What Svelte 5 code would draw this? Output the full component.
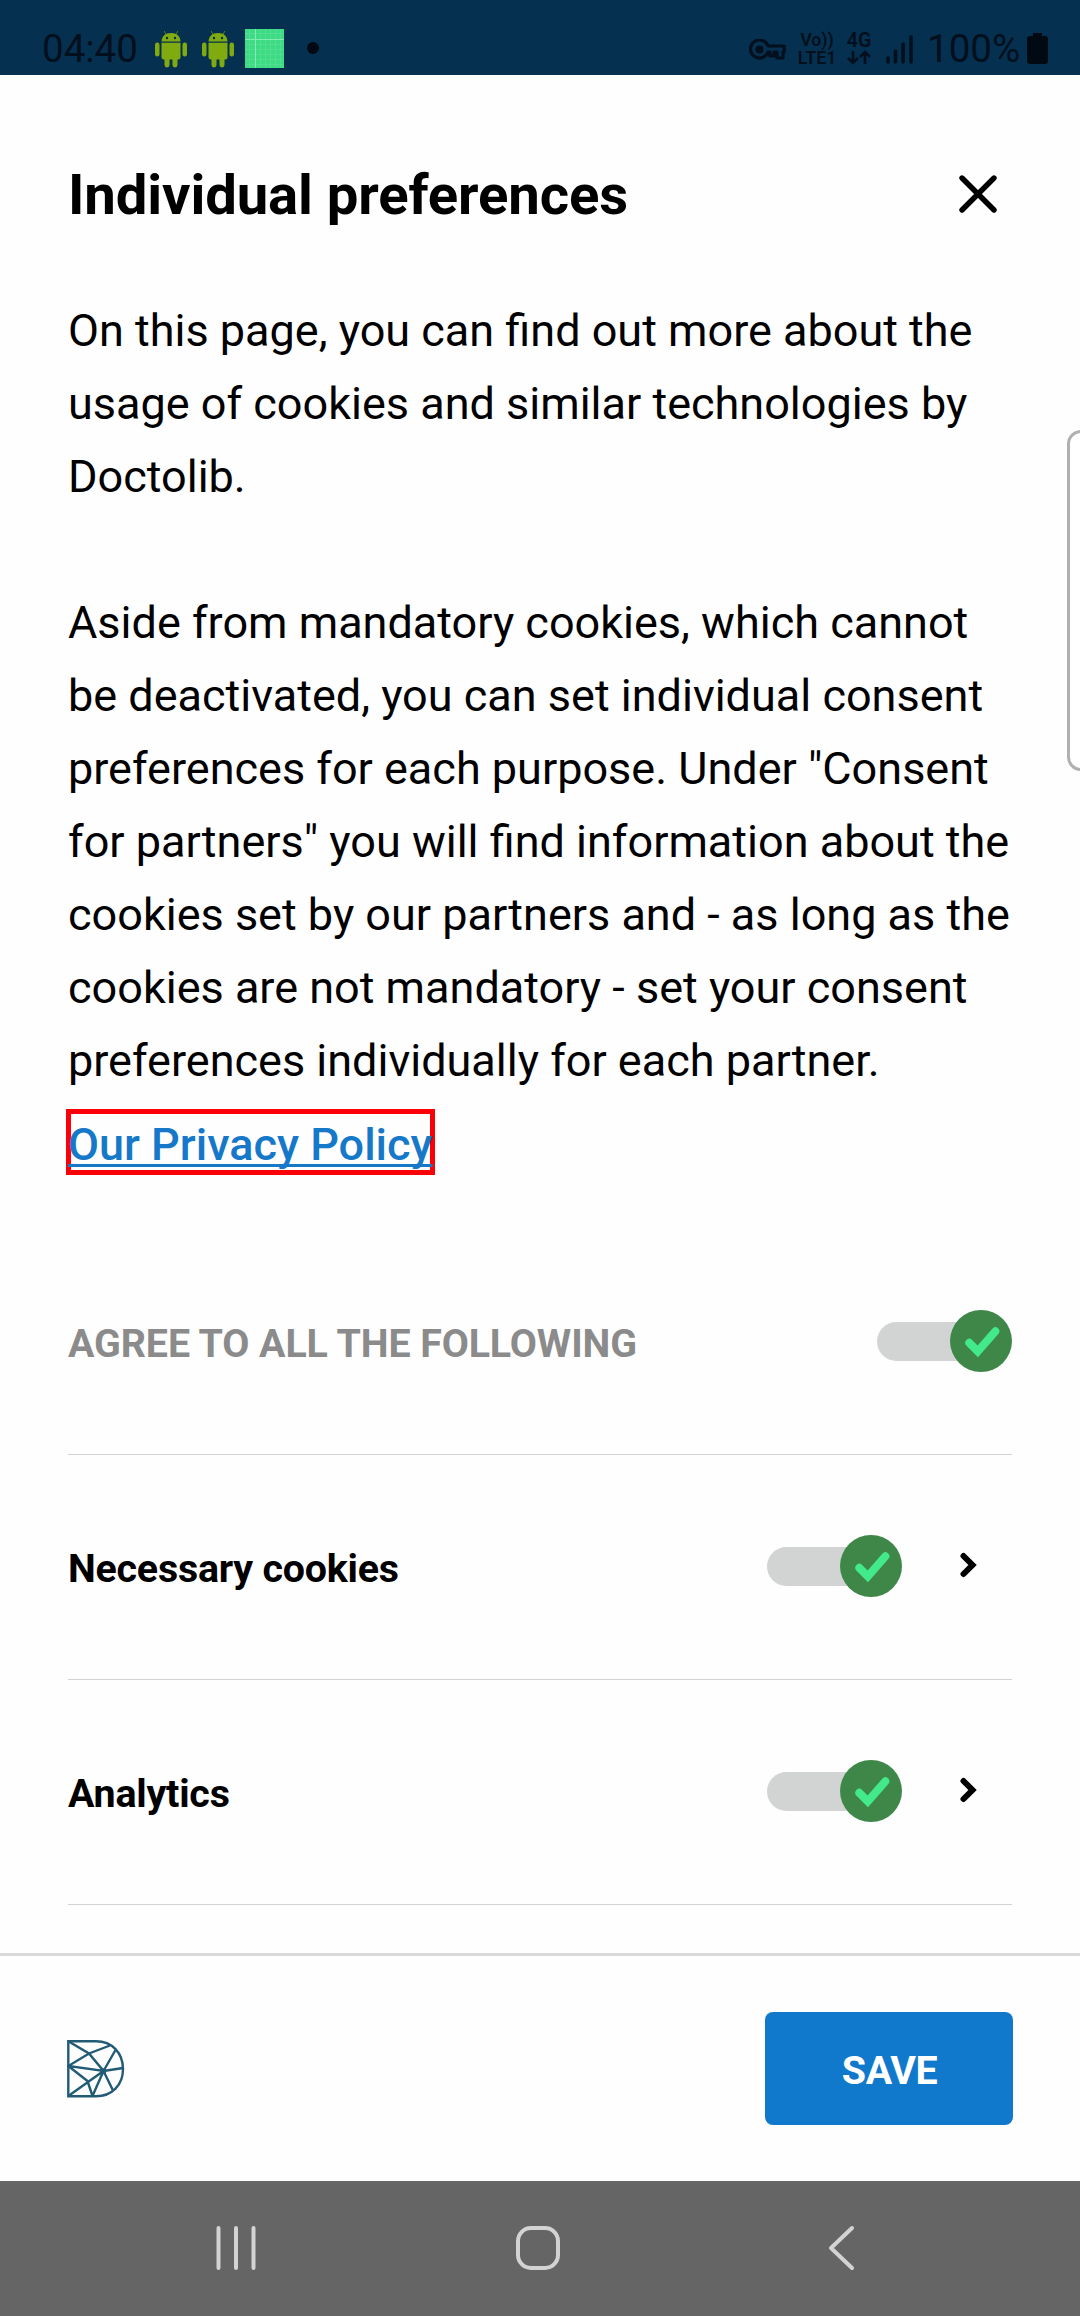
<script>
  const paragraphs = [
    ['On this page, you can find out more about the', 'usage of cookies and similar technologies by', 'Doctolib.'],
    [
      'Aside from mandatory cookies, which cannot',
      'be deactivated, you can set individual consent',
      'preferences for each purpose. Under "Consent',
      'for partners" you will find information about the',
      'cookies set by our partners and - as long as the',
      'cookies are not mandatory - set your consent',
      'preferences individually for each partner.'
    ]
  ];
  let rows = $state([
    { label: 'AGREE TO ALL THE FOLLOWING', all: true, on: true },
    { label: 'Necessary cookies', all: false, on: true },
    { label: 'Analytics', all: false, on: true }
  ]);
</script>

{#snippet android()}
  <svg class="android" width="32" height="38" viewBox="0 0 32 38">
    <g fill="#7fab10">
      <path d="M6.500 11.500C7 6 10 3 16 3s9 3 9.500 8.500z" />
      <path d="M6.500 12.700h19V27a2.500 2.500 0 0 1-2.500 2.500H9A2.500 2.500 0 0 1 6.500 27z" />
      <rect x="0" y="12.500" width="4.500" height="14" rx="2.200" />
      <rect x="27.500" y="12.500" width="4.500" height="14" rx="2.200" />
      <rect x="9.500" y="26" width="5" height="11.500" rx="2.400" />
      <rect x="17.500" y="26" width="5" height="11.500" rx="2.400" />
    </g>
    <path d="M10.800 4L9.200 1M21.200 4l1.600-3" stroke="#4f7a20" stroke-width="1" />
    <circle cx="12" cy="8" r="1.200" fill="#06304f" /><circle cx="20" cy="8" r="1.200" fill="#06304f" />
  </svg>
{/snippet}

<div class="screen">
  <header class="status">
    <span class="time">04:40</span>
    {@render android()}
    {@render android()}
    <svg class="grid" width="39" height="39" viewBox="0 0 39 39">
      <rect width="39" height="39" fill="#3ddc84" />
      <path d="M4.500 0v39M15.500 0v39M20.500 0v39M25.500 0v39M30.500 0v39M35.500 0v39M0 4.500h39M0 15.500h39M0 20.500h39M0 25.500h39M0 30.500h39M0 35.500h39" stroke="#50df90" stroke-width="1" />
      <path d="M10.500 0v39M0 10.500h39" stroke="#84ecb0" stroke-width="1" />
    </svg>
    <span class="dot"></span>
    <div class="system">
      <svg class="key" width="37" height="22" viewBox="0 0 37 22">
        <path d="M19 7h16.200v6H34v6h-6v-6h-3v4h-4v-4h-2a9 9 0 1 1 0-6z" fill="none" stroke="#020f1c" stroke-width="3.200" stroke-linejoin="round" />
        <circle cx="10.500" cy="10.500" r="4" fill="#020f1c" />
      </svg>
      <div class="volte"><span>Vo))</span><span>LTE1</span></div>
      <div class="network">
        <span>4G</span>
        <svg width="26" height="15" viewBox="0 0 26 15">
          <path d="M7 1v11M2 8l5 5 5-5M19 14V3M14 7l5-5 5 5" fill="none" stroke="#020f1c" stroke-width="2.600" />
        </svg>
      </div>
      <svg class="signal" width="27" height="30" viewBox="0 0 27 30">
        <path d="M2 28v-4M9.500 28V17M17 28V10M25 28V3" stroke="#020f1c" stroke-width="3.600" stroke-linecap="round" />
      </svg>
      <span class="percent">100%</span>
      <svg class="battery" width="21" height="31" viewBox="0 0 21 31">
        <path d="M6 0h9v3h3a3 3 0 0 1 3 3v22a3 3 0 0 1-3 3H3a3 3 0 0 1-3-3V6a3 3 0 0 1 3-3h3z" fill="#010a12" />
      </svg>
    </div>
  </header>

  <main>
    <div class="heading">
      <h1>Individual preferences</h1>
      <button class="close" aria-label="Close">
        <svg width="40" height="40" viewBox="0 0 40 40"><path d="M4 4l32 32M36 4L4 36" stroke="#000" stroke-width="5.400" stroke-linecap="round" /></svg>
      </button>
    </div>
    {#each paragraphs as lines}
      <p>{#each lines as line}<span class="line">{line}</span>{/each}</p>
    {/each}
    <a class="policy" href="#policy">Our Privacy Policy</a>

    <div class="rows">
      {#each rows as row}
        <div class="row" class:all={row.all}>
          <span class="label">{row.label}</span>
          <button class="toggle" aria-label={row.label} aria-pressed={row.on} onclick={() => (row.on = !row.on)}>
            <svg width="135" height="62" viewBox="0 0 135 62">
              <rect x="0" y="12" width="125" height="39" rx="19.500" fill="#d2d4d3" />
              <circle cx="104" cy="31" r="31" fill="#3e8748" />
              <path d="M92.300 32.800l8.500 8.500L118.300 21.300" fill="none" stroke="#43ea8c" stroke-width="8" stroke-linecap="round" />
            </svg>
          </button>
          {#if !row.all}
            <svg class="chevron" width="18" height="26" viewBox="0 0 18 26"><path d="M4.500 4l9 9-9 9" fill="none" stroke="#000" stroke-width="6" stroke-linecap="round" /></svg>
          {/if}
        </div>
      {/each}
    </div>
  </main>

  <footer>
    <svg width="58" height="58" viewBox="0 0 58 58" fill="none" stroke="#225b75" stroke-width="2.400">
      <path d="M1.300 1.300H29C45 1.300 56 13 56 29S45 56.300 29 56.300H1.300z" />
      <path d="M1.300 1.300L22 13.500 36.500 31 1.300 26 22 13.500 43 5.500M36.500 31L48.500 10M36.500 31L56 28M36.500 31L46 50.500M36.500 31L25.500 56M36.500 31L1.300 56M1.300 26L20.500 41 25.500 56" />
      <circle cx="36.500" cy="31" r="1.500" fill="#225b75" />
    </svg>
    <button class="save">SAVE</button>
  </footer>

  <nav>
    <svg width="40" height="46" viewBox="0 0 40 46"><path d="M2.500 3v40M20 3v40M37.500 3v40" stroke="#d3d3d3" stroke-width="4" stroke-linecap="round" /></svg>
    <svg class="home" width="44" height="44" viewBox="0 0 44 44"><rect x="2" y="2" width="40" height="40" rx="13" fill="none" stroke="#d3d3d3" stroke-width="4" /></svg>
    <svg width="28" height="46" viewBox="0 0 28 46"><path d="M24 3L3 23l21 20" fill="none" stroke="#d3d3d3" stroke-width="4" stroke-linecap="round" stroke-linejoin="round" /></svg>
  </nav>
  <div class="edge-handle"></div>
</div>

<style>
  :global(body) { margin: 0; background: #fff; }
  .screen {
    position: relative; width: 1080px; height: 2316px; overflow: hidden;
    display: flex; flex-direction: column; box-sizing: border-box;
    background: #fefefe; color: #000; font-family: Roboto, sans-serif;
  }
  button { border: 0; padding: 0; background: none; font: inherit; }
  svg { display: block; flex: none; }

  .status { height: 75px; flex: none; box-sizing: border-box; padding: 20px 32px 0 42px; display: flex; align-items: center; background: #06304f; color: #020f1c; }
  .time { width: 113px; font-size: 38.500px; line-height: 56px; padding-top: 2px; flex: none; }
  .android { margin: 2px 15px 0 0; }
  .grid { margin: 2px 0 0 -4px; }
  .dot { width: 12px; height: 12px; margin-left: 23px; border-radius: 50%; background: #010a12; }
  .system { margin-left: auto; display: flex; align-items: center; }
  .key { margin: 4px 11px 0 0; }
  .volte { width: 40px; display: flex; flex-direction: column; align-items: center; font-size: 17.800px; line-height: 18px; font-weight: 600; margin: 2px 8px 0 0; }
  .network { width: 28px; display: flex; flex-direction: column; align-items: center; font-size: 19.500px; line-height: 18px; font-weight: 600; margin: 2px 13px 0 0; }
  .signal { margin: 2px 14px 0 0; }
  .percent { width: 93px; font-size: 38.500px; line-height: 56px; padding-top: 2px; }
  .battery { margin: 2px 0 0 7px; }

  main { height: 1878px; flex: none; box-sizing: border-box; padding: 79px 68px 0; overflow: hidden; }
  .heading { height: 80px; display: flex; justify-content: space-between; align-items: center; margin-bottom: 60px; }
  h1 { margin: 0; padding-top: 2px; font-size: 56.250px; line-height: 78px; font-weight: 700; letter-spacing: -0.12px; white-space: nowrap; }
  .close { margin-right: 14px; }
  p { margin: 0 0 73px; font-size: 45px; line-height: 73px; }
  .line { display: block; white-space: nowrap; }
  p + p { margin-bottom: 12px; }
  .policy { display: block; width: 359px; height: 56px; box-sizing: content-box; margin-left: -2px; border: 5px solid #fb0007; color: #1578c9; font-size: 45px; line-height: 61px; font-weight: 500; text-indent: -3px; text-decoration: underline; text-decoration-thickness: 3px; text-decoration-skip-ink: none; text-underline-offset: 4px; white-space: nowrap; }
  .rows { margin-top: 55px; }
  .row { height: 225px; box-sizing: border-box; padding-bottom: 2px; border-bottom: 1px solid #d2d2d2; display: flex; align-items: center; }
  .label { flex: 1; font-size: 39.375px; line-height: 50px; font-weight: 700; letter-spacing: -0.22px; padding-top: 6px; white-space: nowrap; }
  .all .label { color: #8b8b8b; letter-spacing: -0.1px; }
  .chevron { margin: 0 35px 2px 57px; }

  footer { height: 228px; flex: none; box-sizing: border-box; border-top: 3px solid #dadada; padding: 0 67px; display: flex; justify-content: space-between; align-items: center; }
  .save { width: 248px; height: 113px; padding: 4px 0 0 1px; border-radius: 8px; background: #1079cc; color: #fff; font-size: 39.375px; font-weight: 700; letter-spacing: -0.4px; }

  nav { height: 135px; flex: none; box-sizing: border-box; padding: 0 224px 1px 216px; display: flex; justify-content: space-between; align-items: center; background: #656565; }
  .home { margin-right: 9px; }

  /* Side panel handle that floats over the sheet at the screen edge */
  .edge-handle { position: absolute; left: 1067px; top: 430px; width: 40px; height: 341px; box-sizing: border-box; border: 3px solid #b0b0b0; border-radius: 14px; background: #fff; }
</style>
